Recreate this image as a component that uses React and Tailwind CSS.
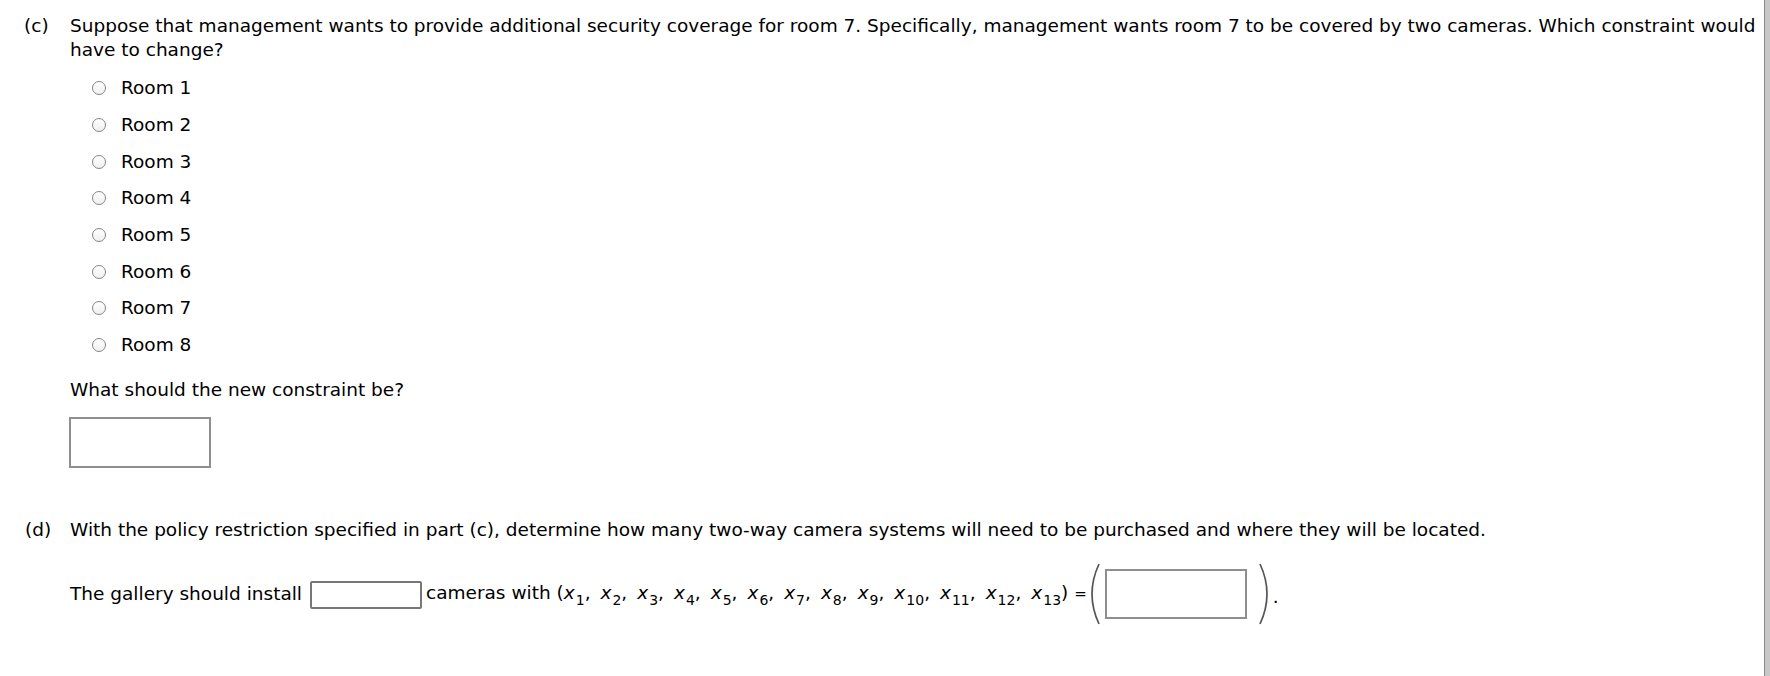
import React from "react";

const rooms = [1, 2, 3, 4, 5, 6, 7, 8];
const vars = [1, 2, 3, 4, 5, 6, 7, 8, 9, 10, 11, 12, 13];

const Radio = ({ label }) => (
  <label className="flex items-center h-[36.7px] pl-[22px] cursor-pointer">
    <span className="w-[14px] h-[14px] rounded-full border border-[#858585] bg-gradient-to-b from-white to-[#f0f0f0]" />
    <span className="ml-[15px]">{label}</span>
  </label>
);

const Paren = ({ flip = false }) => (
  <svg width="12" height="62" viewBox="0 0 12 62" className="shrink-0">
    <path
      d={flip ? "M1 1 Q15 31 1 61" : "M11 1 Q-3 31 11 61"}
      fill="none"
      stroke="#555"
      strokeWidth="1.7"
    />
  </svg>
);

export default function App() {
  return (
    <div className="flex w-[1770px] h-[676px] bg-white text-black font-['DejaVu_Sans','Liberation_Sans',sans-serif] text-[18.5px] leading-[24px]">
      <div className="flex-1 pt-[14px]">
        {/* part c */}
        <section className="flex">
          <div className="w-[70px] pl-[24px] shrink-0">(c)</div>
          <div className="flex-1">
            <p>
              Suppose that management wants to provide additional security coverage for room 7. Specifically, management wants room 7 to be covered by two cameras. Which constraint would have to change?
            </p>
            <div className="mt-[8px] flex flex-col">
              {rooms.map((r) => (
                <Radio key={r} label={`Room ${r}`} />
              ))}
            </div>
            <p className="mt-[14px]">What should the new constraint be?</p>
            <input
              type="text"
              className="mt-[15px] -ml-[1px] block w-[142px] h-[51px] border-2 border-[#8f8f8f] bg-white outline-none"
            />
          </div>
        </section>

        {/* part d */}
        <section className="flex mt-[50px]">
          <div className="w-[70px] pl-[25px] shrink-0">(d)</div>
          <div className="flex-1">
            <p>
              With the policy restriction specified in part (c), determine how many two-way camera systems will need to be purchased and where they will be located.
            </p>
            <div className="mt-[20px] flex items-center h-[64px]">
              <span>The gallery should install</span>
              <input
                type="text"
                className="ml-[8px] w-[112px] h-[28px] border-2 border-[#777] rounded-[2px] bg-white outline-none mt-[3px]"
              />
              <span className="ml-[4px] whitespace-pre">
                cameras with (
                {vars.map((v, i) => (
                  <span key={v}>
                    <span className="italic">x</span>
                    <span className="relative top-[6px] ml-[1px] text-[14px] not-italic">{v}</span>
                    {i < vars.length - 1 ? <span className="mr-[4.1px]">, </span> : ""}
                  </span>
                ))}
                ){" "}
                <span className="text-[15px]">=</span>
              </span>
              <span className="ml-[1px] flex items-center">
                <Paren />
                <input
                  type="text"
                  className="ml-[5px] w-[142px] h-[50px] border-2 border-[#8f8f8f] bg-white outline-none"
                />
                <span className="ml-[12px]">
                  <Paren flip />
                </span>
                <span className="ml-[2px] mt-[6px]">.</span>
              </span>
            </div>
          </div>
        </section>
      </div>
      <div className="w-[6px] shrink-0 bg-[#c8c8c8] border-l border-[#8a8a8a]" />
    </div>
  );
}
